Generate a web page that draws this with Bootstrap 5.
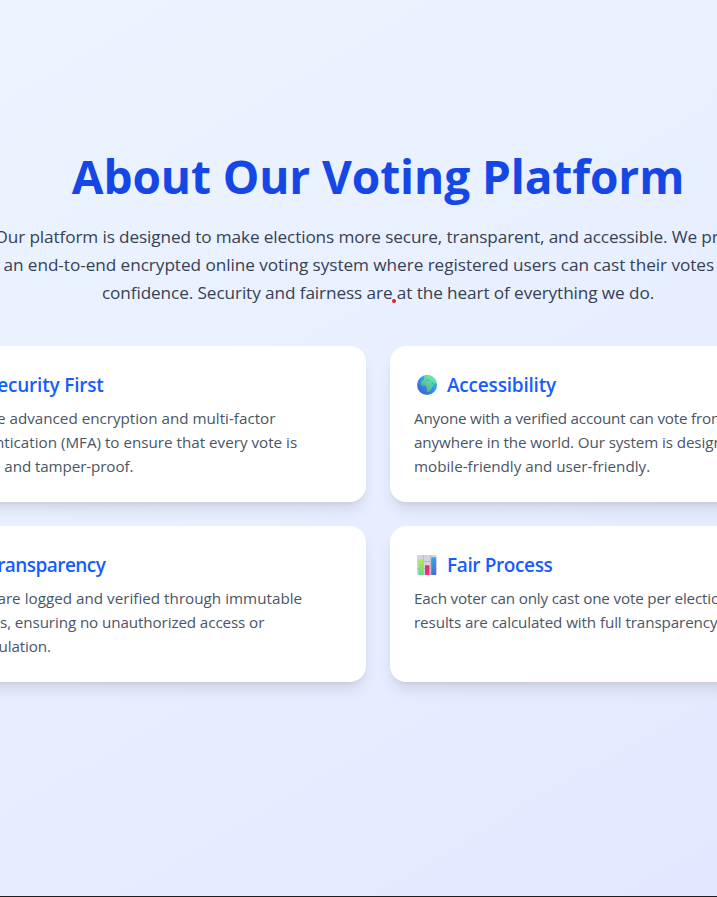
<!DOCTYPE html>
<html lang="en">
<head>
<meta charset="utf-8">
<meta name="viewport" content="width=device-width, initial-scale=1">
<title>About Our Voting Platform</title>
<link rel="stylesheet" href="https://cdn.jsdelivr.net/npm/bootstrap@5.3.0/dist/css/bootstrap.min.css">
<style>
body{font-family:"Open Sans","Noto Sans",sans-serif;background:#1e1e1e;height:897px}
.stage{height:896px}
.about{width:1520px;margin-left:-382px;padding-top:150px;background:linear-gradient(to bottom right,#eff6ff,#e0e7ff)}
.about-title{font-size:46px;line-height:48px;letter-spacing:-.09px;color:#1447e6;margin-bottom:24px;padding-top:2px;height:48px}
.intro{width:768px;font-size:17.2px;line-height:28px;color:#364153;padding-top:1px;margin-bottom:39px}
.line{display:block;white-space:nowrap}
.intro .line{margin-left:-40px;margin-right:-40px}
.features{display:grid;grid-template-columns:436px 436px;gap:24px}
.feature{border-radius:16px;height:156px;padding:24px;box-shadow:0 10px 15px -3px rgba(0,0,0,.1),0 4px 6px -4px rgba(0,0,0,.1)}
.feature-title{font-size:19px;line-height:28px;height:28px;color:#155dfc;margin-bottom:8px}
.feature-title span{padding-top:2px}
.feature-title svg{width:20px;height:20px;margin:1px 10px 0 3px;flex:none}
.feature-text{font-size:15.2px;line-height:24px;color:#4a5565}
.k1{letter-spacing:-.12px}.k2{letter-spacing:-.055px}.k3{letter-spacing:-.1px}
.k4{letter-spacing:-.19px}.k5{letter-spacing:-.165px}.k6{letter-spacing:.02px}.k7{letter-spacing:-.1px}
.k8{letter-spacing:-.38px}.k9{letter-spacing:-.2px}.k10{letter-spacing:-.55px}.k11{letter-spacing:-.1px}
.dot{left:391.5px;top:298.5px;width:4px;height:4px;background:#ed1c24}
</style>
</head>
<body class="overflow-hidden">
<div class="stage overflow-hidden position-relative">
<main class="about h-100 d-flex flex-column align-items-center">
<h1 class="about-title fw-bold text-nowrap">About Our Voting Platform</h1>
<p class="intro text-center"><span class="line k1">Our platform is designed to make elections more secure, transparent, and accessible. We provide</span><span class="line k2">an end-to-end encrypted online voting system where registered users can cast their votes with</span><span class="line k3">confidence. Security and fairness are at the heart of everything we do.</span></p>
<section class="features">
<article class="feature bg-white">
<h2 class="feature-title fw-semibold d-flex align-items-center"><svg viewBox="0 0 20 20"><path d="M6 9V6a4 4 0 0 1 8 0v3" fill="none" stroke="#999" stroke-width="2"/><rect x="3" y="9" width="14" height="10" rx="2" fill="#f9bd3b"/></svg><span class="k9">Security First</span></h2>
<p class="feature-text mb-0"><span class="line">We use advanced encryption and multi-factor</span><span class="line">authentication (MFA) to ensure that every vote is</span><span class="line k11">secure and tamper-proof.</span></p>
</article>
<article class="feature bg-white">
<h2 class="feature-title fw-semibold d-flex align-items-center"><svg viewBox="0 0 20 20"><defs><linearGradient id="sea" x1=".8" y1=".2" x2=".25" y2=".9"><stop stop-color="#2ab4f5"/><stop offset=".5" stop-color="#3290e8"/><stop offset="1" stop-color="#4167cf"/></linearGradient><linearGradient id="land" x1=".9" y1="0" x2=".2" y2="1"><stop stop-color="#73f5a4"/><stop offset="1" stop-color="#4fa991"/></linearGradient></defs><circle cx="10" cy="10" r="10" fill="url(#sea)"/><path d="M6.2 2.1Q8 .4 11 .1Q16 .7 18.6 4.8Q20 7 19.6 9.2L18.5 7.6L17.3 9.7L15.7 7.2L14 6.7L15.7 9.6L17 9.5Q16 11.5 14.6 12.5L13.8 15L11.7 17.1L10.2 16.8L9.4 12.3L8.5 10.6L5.7 11L3.7 9L4.2 6.5L6.2 5.3L7.3 3.3Z" fill="url(#land)"/><path d="M8.2 4.9Q10 3.8 12 5.2L13.8 4.9L13.5 6.1L10.2 5.9L8.6 5.4Z" fill="#3caecb" opacity=".65"/></svg><span class="k9">Accessibility</span></h2>
<p class="feature-text mb-0"><span class="line k4">Anyone with a verified account can vote from</span><span class="line k7">anywhere in the world. Our system is designed to be</span><span class="line">mobile-friendly and user-friendly.</span></p>
</article>
<article class="feature bg-white">
<h2 class="feature-title fw-semibold d-flex align-items-center"><svg viewBox="0 0 20 20"><path d="M4 1h13v18H4z" fill="#f3d9a7"/><path d="M7 6h7M7 10h7M7 14h5" stroke="#a88556"/></svg><span class="k10">Transparency</span></h2>
<p class="feature-text mb-0"><span class="line k6">Votes are logged and verified through immutable</span><span class="line k7">records, ensuring no unauthorized access or</span><span class="line k11">manipulation.</span></p>
</article>
<article class="feature bg-white">
<h2 class="feature-title fw-semibold d-flex align-items-center"><svg viewBox="0 0 20 20"><defs><linearGradient id="green" x1="0" y1="0" x2="0" y2="1"><stop stop-color="#b5e850"/><stop offset="1" stop-color="#5bdc91"/></linearGradient><linearGradient id="blue" x1="0" y1="0" x2="0" y2="1"><stop stop-color="#2fa6f2"/><stop offset="1" stop-color="#4270c9"/></linearGradient><linearGradient id="pink" x1="0" y1="0" x2="0" y2="1"><stop stop-color="#d32f6f"/><stop offset="1" stop-color="#f9307e"/></linearGradient></defs><rect width="20" height="20" rx="1.8" fill="#d8d2e0"/><path d="M0 6.5h20M0 13.5h20M6.6 0v20M13.4 0v20" stroke="#b9b1c6" stroke-width=".8"/><rect x="1.4" y="4.6" width="4.8" height="15.4" rx=".6" fill="url(#green)"/><rect x="8" y="10.3" width="4.4" height="9.7" rx=".6" fill="url(#pink)"/><rect x="14.2" y="2.2" width="4.8" height="17.8" rx=".6" fill="url(#blue)"/></svg><span class="k8">Fair Process</span></h2>
<p class="feature-text mb-0"><span class="line k5">Each voter can only cast one vote per election, and</span><span class="line k7">results are calculated with full transparency.</span></p>
</article>
</section>
</main>
<span class="dot position-absolute rounded-circle"></span>
</div>
<script src="https://cdn.jsdelivr.net/npm/bootstrap@5.3.0/dist/js/bootstrap.bundle.min.js"></script>
</body>
</html>
